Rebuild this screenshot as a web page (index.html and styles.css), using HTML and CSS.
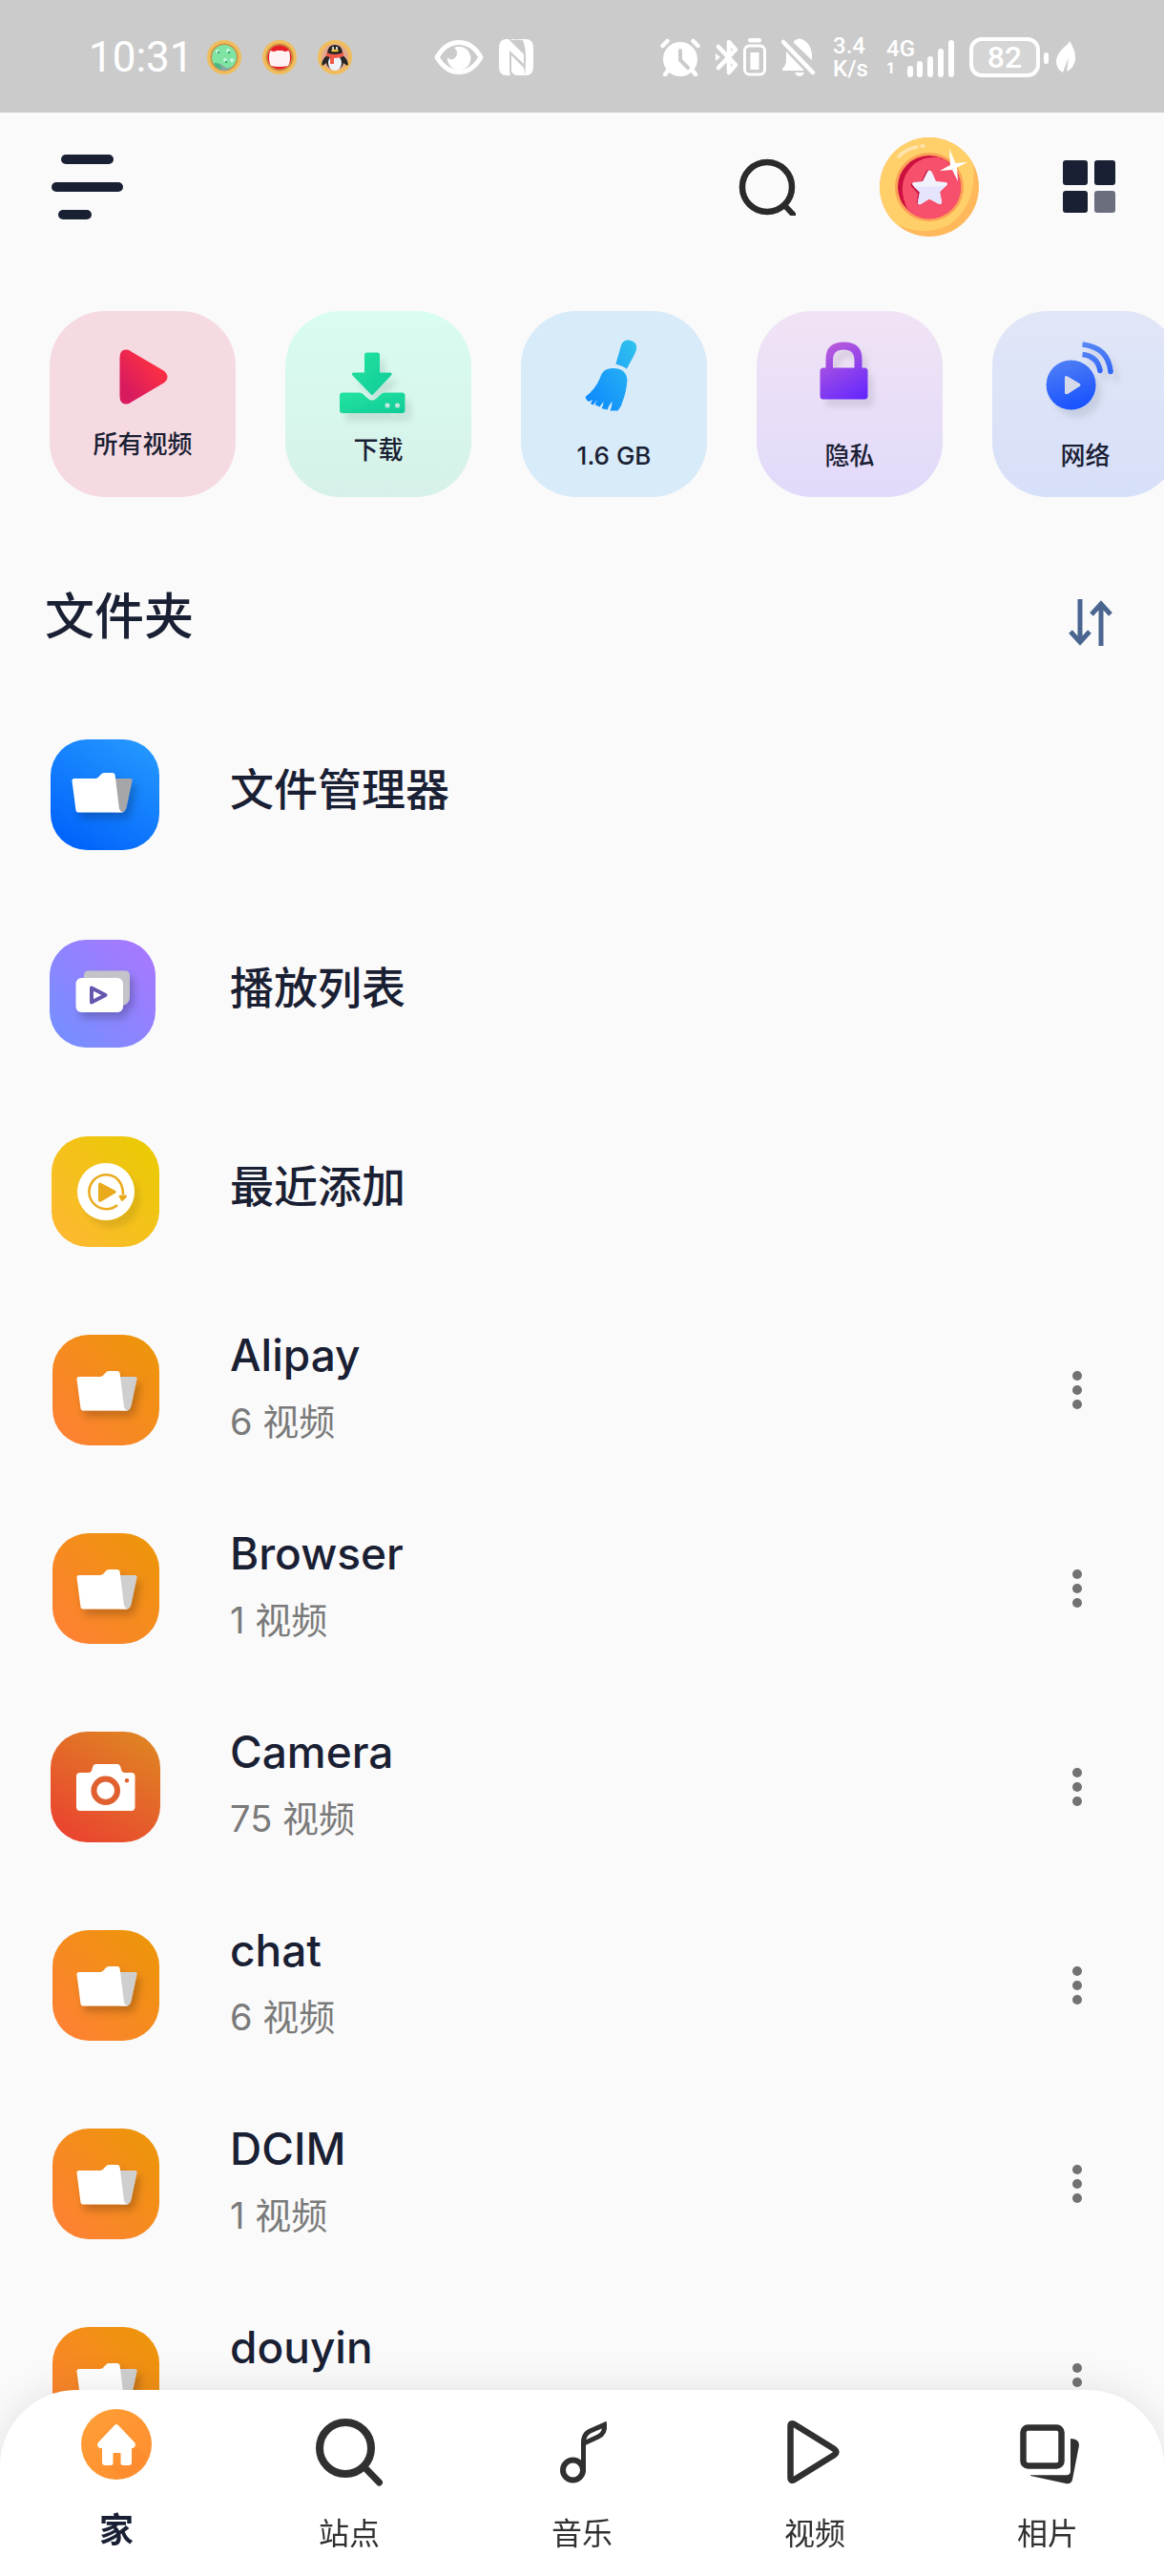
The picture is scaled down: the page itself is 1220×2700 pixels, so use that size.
FILE: index.html
```
<!DOCTYPE html>
<html lang="zh-CN">
<head>
    <meta charset="UTF-8">
    <meta name="viewport" content="width=device-width, initial-scale=1.0">
    <title>文件夹</title>
    <link rel="stylesheet" href="styles.css">
</head>
<body>
    <!-- Shared gradients and symbols -->
    <svg class="defs" width="0" height="0" aria-hidden="true">
        <defs>
            <linearGradient id="gOrange" x1="0" y1="1" x2="1" y2="0"><stop offset="0" stop-color="#ff7f37"/><stop offset="1" stop-color="#ec9706"/></linearGradient>
            <linearGradient id="gBlue" x1="0.2" y1="1" x2="0.8" y2="0"><stop offset="0" stop-color="#0062fb"/><stop offset="1" stop-color="#2497ff"/></linearGradient>
            <linearGradient id="gPurple" x1="0" y1="1" x2="1" y2="0"><stop offset="0.15" stop-color="#7a8dff"/><stop offset="1" stop-color="#ac76ff"/></linearGradient>
            <linearGradient id="gYellow" x1="0" y1="1" x2="1" y2="0"><stop offset="0" stop-color="#ffb735"/><stop offset="1" stop-color="#e9cc00"/></linearGradient>
            <linearGradient id="gCamera" x1="0.2" y1="1" x2="0.8" y2="0"><stop offset="0" stop-color="#ea4330"/><stop offset="1" stop-color="#df8423"/></linearGradient>
            <linearGradient id="gPlay" x1="0" y1="1" x2="1" y2="0"><stop offset="0.2" stop-color="#d81b5f"/><stop offset="0.8" stop-color="#ff3140"/></linearGradient>
            <linearGradient id="gGreen" x1="0" y1="0" x2="1" y2="1"><stop offset="0" stop-color="#25e3a0"/><stop offset="1" stop-color="#0fcb98"/></linearGradient>
            <linearGradient id="gBroom" x1="1" y1="0" x2="0" y2="1"><stop offset="0" stop-color="#31c3ee"/><stop offset="1" stop-color="#0a84ff"/></linearGradient>
            <linearGradient id="gLock" gradientUnits="userSpaceOnUse" x1="30" y1="6" x2="66" y2="68"><stop offset="0" stop-color="#bd5fd8"/><stop offset="1" stop-color="#6226ff"/></linearGradient>
            <linearGradient id="gNet" gradientUnits="userSpaceOnUse" x1="30" y1="10" x2="50" y2="78"><stop offset="0" stop-color="#5d8af2"/><stop offset="1" stop-color="#154fff"/></linearGradient>
            <linearGradient id="gHome" x1="0" y1="0" x2="1" y2="1"><stop offset="0" stop-color="#ff9f36"/><stop offset="1" stop-color="#ff8c2e"/></linearGradient>
            <filter id="shadow" x="-40%" y="-40%" width="200%" height="200%"><feDropShadow dx="4" dy="6" stdDeviation="4" flood-color="#000" flood-opacity="0.22"/></filter>
            <filter id="soft" x="-40%" y="-40%" width="200%" height="200%"><feDropShadow dx="6" dy="8" stdDeviation="3" flood-color="#000" flood-opacity="0.09"/></filter>
        </defs>
        <symbol id="folder" viewBox="0 0 116 116">
            <g filter="url(#shadow)">
                <path fill="currentColor" d="M70 44h19.500q2.500 0 2 2.500l-6 28q-1 4-4 5H74z"/>
                <path fill="#fff" d="M31 44h22q2 0 3.500-1.800l2-2.200q1.600-1.900 4-1.900h8.200q2.700 0 3 2.900l4.100 33.500q.6 4 4.200 4.900H35q-2.200 0-2.500-2.200L28.500 46.500Q28.300 44 31 44z"/>
            </g>
        </symbol>
        <symbol id="dots" viewBox="0 0 10 40">
            <circle cx="5" cy="5" r="5"/><circle cx="5" cy="20" r="5"/><circle cx="5" cy="35" r="5"/>
        </symbol>
        <symbol id="orangeFolder" viewBox="0 0 116 116">
            <rect x="3" width="112" height="116" rx="38" fill="url(#gOrange)"/>
            <use href="#folder" width="116" height="116"/>
        </symbol>
    </svg>

    <div class="status-bar">
        <span class="time">10:31</span>
        <div class="status-coins">
            <svg width="36" height="38" viewBox="0 0 36 38"><circle cx="18" cy="19" r="18" fill="#f0bd5c"/><circle cx="18" cy="19" r="14.500" fill="#c98f43"/><circle cx="18" cy="19" r="13" fill="#7fe3a2"/><path d="M8 28q4-5 9 0t11-1q-4 6-10 6T8 28z" fill="#8aa6a0"/><path d="M7 26q3-3 9 4l-3 1q-4-2-6-5z" fill="#43b880"/><g fill="#c9f7e2"><circle cx="11" cy="13" r="2"/><circle cx="22" cy="12" r="2"/><circle cx="19" cy="22" r="2"/><circle cx="26" cy="22" r="2"/></g><g fill="#2fa768"><circle cx="12" cy="14" r="1.200"/><circle cx="23" cy="14" r="1.200"/><circle cx="20" cy="24" r="1.200"/></g></svg>
            <svg width="36" height="38" viewBox="0 0 36 38"><circle cx="18" cy="19" r="18" fill="#f0bd5c"/><circle cx="18" cy="19" r="14.500" fill="#d08c3e"/><circle cx="18" cy="19" r="12.500" fill="#e8202a"/><path d="M9 12q3 2 6 0h6q3 2 6 0 2 1 2 7t-2 9q-9 2-18 0-2-3-2-9t2-7z" fill="#fff2f2"/></svg>
            <svg width="36" height="38" viewBox="0 0 36 38"><circle cx="18" cy="19" r="18" fill="#f0bd5c"/><circle cx="18" cy="19" r="14" fill="#e3a98f"/><path d="M10 16Q10 6 18 6t8 10l4 5q3 5 1 7l-4-3q-1 6-9 7-8-1-9-7l-4 3q-2-2 1-7z" fill="#262626"/><ellipse cx="18" cy="25" rx="7" ry="8" fill="#eef3f8"/><path d="M9 14q9 4 18 0v4q-4 2-10 2v6h-4v-7l-4-1z" fill="#f0584a"/><ellipse cx="18" cy="12" rx="4" ry="1.300" fill="#f6c33c"/><ellipse cx="16" cy="9.500" rx="1" ry="1.400" fill="#fff"/><ellipse cx="20" cy="9.500" rx="1" ry="1.400" fill="#fff"/></svg>
        </div>
        <div class="status-left-icons">
            <svg width="52" height="38" viewBox="0 0 52 38"><path d="M3 19Q12 3.500 26 3.500T49 19Q40 34.500 26 34.500T3 19z" fill="none" stroke="#fff" stroke-width="5" stroke-linejoin="round"/><path d="M21 9a12.200 12.200 0 1 1-7 10 5 5 0 0 0 9-1q3-5-2-9z" fill="#fff"/></svg>
            <svg width="36" height="38" viewBox="0 0 36 38"><path d="M8 0h2l16 16v10L11 12v19q0 5 1 7H8q-8 0-8-9V9q0-9 8-9zM13 1q5-1 12 0 3 8 3 18 0 12-1 19h1q8 0 8-9V9q0-9-8-9H13zM13 17l13 13q1 5 1 8h-8q-6-1-6-6z" fill="#fff"/></svg>
        </div>
        <div class="status-right">
            <svg width="42" height="40" viewBox="0 0 42 40"><g stroke="#fff" stroke-width="4.500" stroke-linecap="round"><path d="M2.500 8l5-5M39.500 8l-5-5M9 33l-4 5M33 33l4 5"/></g><circle cx="21" cy="22" r="18" fill="#fff"/><path d="M21 13v10l8 8" fill="none" stroke="#cbcbcb" stroke-width="4" stroke-linecap="round"/></svg>
            <svg width="53" height="40" viewBox="0 0 53 40"><path d="M3 9l18 19-7 8V4l7 8L3 31" fill="none" stroke="#fff" stroke-width="4.500" stroke-linejoin="round" stroke-linecap="round"/><path d="M0 16v8l5-4z" fill="#fff"/><rect x="34" width="14" height="4.500" rx="2.200" fill="#fff"/><rect x="30.500" y="8" width="21" height="30" rx="5" fill="none" stroke="#fff" stroke-width="3"/><rect x="36.500" y="15" width="9" height="18" fill="#fff"/></svg>
            <svg width="38" height="40" viewBox="0 0 38 40"><path d="M2 4l31 32" stroke="#fff" stroke-width="4.500" stroke-linecap="round"/><path d="M5 14l19 20H2q-2 0-1-2 4-3 4-9zM13 3q6-5 12 0 8 6 7 20L13 5zM14 36h10q-2 4-5 4t-5-4z" fill="#fff"/></svg>
            <div class="net-speed"><span>3.4</span><span>K/s</span></div>
            <div class="network-state">
                <div class="net-type"><span>4G</span><span class="sim">1</span></div>
                <svg width="49" height="40" viewBox="0 0 49 40" stroke="#fff" stroke-width="6" stroke-linecap="round"><path d="M3 31v6M13 26v11M24 21v16M35 13v24M46 4v33"/></svg>
            </div>
            <div class="battery">
                <span class="battery-level">82</span>
                <svg width="33" height="34" viewBox="0 0 33 34"><rect y="12" width="5" height="12" rx="2.500" fill="#fff"/><path d="M27 0q7 11 6 20-2 9-9 12l2-15-6 16q-7-3-7-13 2-9 10-15 3-2 4-5z" fill="#fff"/></svg>
            </div>
        </div>
    </div>

    <header class="top-bar">
        <button class="icon-btn" type="button" aria-label="菜单">
            <svg width="75" height="68" viewBox="0 0 75 68" fill="#1a2033"><rect x="10" width="55" height="10" rx="5"/><rect y="29" width="75" height="10" rx="5"/><rect x="7" y="58" width="35" height="10" rx="5"/></svg>
        </button>
        <div class="top-actions">
            <button class="icon-btn" type="button" aria-label="搜索">
                <svg width="60" height="60" viewBox="0 0 60 60" fill="none" stroke="#2a2a2a" stroke-linecap="round"><circle cx="30" cy="30" r="26" stroke-width="6.500"/><path d="M50 51l7.500 8" stroke-width="6"/></svg>
            </button>
            <button class="icon-btn" type="button" aria-label="奖励">
                <svg width="104" height="104" viewBox="0 0 104 104">
                    <circle cx="52" cy="52" r="52" fill="#ffb95c"/>
                    <path d="M52 0a52 52 0 0 1 46 28Q102 72 72 92 48 104 19 92A52 52 0 0 1 52 0z" fill="#ffd06a"/>
                    <circle cx="52" cy="52" r="36" fill="#fda057"/>
                    <circle cx="52" cy="52" r="33" fill="#cc103f"/>
                    <path d="M62 21a33 33 0 1 1-32 56Q15 47 36 28q11-9 26-7z" fill="#f7506c"/>
                    <path d="M51 34q-2 0-3 3l-4 9-8 1q-4 1-3 4l7 8-1 8 1 4z" fill="#c31345"/>
                    <path d="M52 34.500q2 0 3 2.500l4 9 10 1q3.500 1 1 3.500l-7 6.500 2 10q0 4-3.500 2.500L52 64.500 43 70q-3.500 1-3-2.500l2-10-7-7q-2.500-3 1-3.500l9-1 4.500-9q1-2.500 2.500-2.500z" fill="#f2f2ff"/>
                    <path d="M36 52l33-1-6 6 2 10q0 4-3.500 2.500L52 64.500 43 70q-3.500 1-3-2.500l2-10z" fill="#e4e5fc"/>
                    <path d="M20 20q8-8 19-10M44 9h2" stroke="#ffe3ae" stroke-width="3.500" stroke-linecap="round" fill="none"/>
                    <path d="M73 12l6.500 15L92 26l-11 5.500 1 14.500-6-12-13 1 11-6z" fill="#fff"/>
                    <circle cx="77.500" cy="30" r="3.500" fill="#fff"/>
                </svg>
            </button>
            <button class="icon-btn" type="button" aria-label="视图">
                <svg width="56" height="56" viewBox="0 0 56 56" fill="#1a2033"><rect width="26" height="26" rx="3"/><rect x="33" width="22" height="26" rx="3"/><rect y="32" width="26" height="23" rx="3"/><rect x="33" y="32" width="22" height="23" rx="3" fill="#6a6e7d"/></svg>
            </button>
        </div>
    </header>

    <main>
        <div class="shortcuts">
            <button class="shortcut all-videos" type="button">
                <svg width="84" height="84" viewBox="0 0 84 84"><path d="M17.500 11q0-9 7-8.500 3 0 5 2l34 20q4 3 4 6.500t-4 6.500l-34 20q-2 2-5 2-7 .5-7-8.500z" fill="url(#gPlay)"/></svg>
                <span>所有视频</span>
            </button>
            <button class="shortcut downloads" type="button">
                <svg width="96" height="96" viewBox="0 0 96 96"><g filter="url(#soft)" fill="url(#gGreen)"><path d="M35.500 11.500h11q2.500 0 2.500 2.500v18.500h10.500q3.500 0 1.500 3L42.500 55q-1.500 1.700-3 0L20.500 35.500q-2-3 1.500-3h11V14q0-2.500 2.500-2.500z"/><path fill-rule="evenodd" d="M10 53.500h18q3 0 5 3l4 3.500q4 3 8 0l4-3.500q2-3 5-3h18.500q3 0 3 3V72q0 3-3 3H10q-3 0-3-3V56.500q0-3 3-3zM57 64.400a2.600 2.600 0 1 0 .1 0zM67.500 64.400a2.600 2.600 0 1 0 .1 0z"/></g></svg>
                <span>下载</span>
            </button>
            <button class="shortcut cleaner" type="button">
                <svg width="108" height="108" viewBox="0 0 108 108"><path d="M61 10q2-6 8-5.500 9 1 8 10-1 3-2.500 6L67 34.500Q61 31 55.400 29.500zM39 44q3-11 14-10 13 0 14.500 12-1 13-5 23-1 5-5 9.500h-8q2-4 2-10-3 4-5 9l-6-1.500q2-3 2-7l-4 5.500-5-2.500 2.500-5-4.500 5.500-2.500-1.500 2-4-4 2q-3-2-3.500-5Q34 56 39 44z" fill="url(#gBroom)"/></svg>
                <span>1.6 GB</span>
            </button>
            <button class="shortcut privacy" type="button">
                <svg width="108" height="108" viewBox="0 0 108 108"><path filter="url(#soft)" d="M28.500 33.500v-9q0-18 19-18t19 18v9H69q3.500 0 3.500 3.500v26q0 3.500-3.500 3.500H26q-3.500 0-3.500-3.500V37q0-3.500 3.500-3.500zM36 33.500h22.500v-8q0-11-11.200-11T36 25.500z" fill="url(#gLock)" fill-rule="evenodd"/></svg>
                <span>隐私</span>
            </button>
            <button class="shortcut network" type="button">
                <svg width="108" height="108" viewBox="0 0 108 108"><g filter="url(#soft)"><circle cx="38.600" cy="51.500" r="26" fill="url(#gNet)"/><path d="M50.500 9q27 3 29.500 28.500M50.500 19.500q16 2 18.500 17" fill="none" stroke="url(#gNet)" stroke-width="5.500"/><circle cx="80" cy="37.500" r="2.700" fill="#3168f6"/><circle cx="69" cy="36.500" r="2.700" fill="#3168f6"/></g><path d="M32 44q0-3 3-1.500L47.500 50q2 1.500 0 3L35 61q-3 1-3-1.500z" fill="#d5daea"/></svg>
                <span>网络</span>
            </button>
        </div>

        <div class="section-head">
            <h1>文件夹</h1>
            <button class="icon-btn" type="button" aria-label="排序">
                <svg width="46" height="60" viewBox="0 0 46 60" fill="none" stroke="#4a658f" stroke-width="5"><path d="M12 11v44M2 45l10 11 10-11M34 60V16M24 27l10-11 10 11"/></svg>
            </button>
        </div>

        <ul class="folder-list">
            <li class="folder-row">
                <svg class="folder-icon blue-folder" viewBox="0 0 116 116"><rect x="1" width="114" height="116" rx="38" fill="url(#gBlue)"/><use href="#folder" x="-5" y="-3" width="116" height="116"/></svg>
                <div class="folder-text single-line"><h2>文件管理器</h2></div>
            </li>
            <li class="folder-row">
                <svg class="folder-icon" viewBox="0 0 116 116"><rect y="2" width="111" height="113" rx="38" fill="url(#gPurple)"/><g filter="url(#shadow)"><path d="M41 34.500h38q5 0 5 5V62q0 7-8 9L36 45v-5.500q0-5 5-5z" fill="#c3c3c9"/><rect x="27.500" y="42" width="49.500" height="36" rx="6" fill="#fff"/></g><path d="M44 52.500v15l14.500-7.500z" fill="none" stroke="#6557ae" stroke-width="4" stroke-linejoin="round"/></svg>
                <div class="folder-text single-line"><h2>播放列表</h2></div>
            </li>
            <li class="folder-row">
                <svg class="folder-icon" viewBox="0 0 116 116"><rect x="2" width="113" height="116" rx="38" fill="url(#gYellow)"/><circle cx="59" cy="58" r="30" fill="#fff" filter="url(#soft)"/><path d="M77 61Q77 49 69 43a18 18 0 1 0 2 29" fill="none" stroke="#e9ab1c" stroke-width="2.600"/><path d="M72.500 63q0-1.500 2-1.500h5q2 0 1.500 2l-4 4q-1 .8-2 0z" fill="#e9ab1c"/><path d="M51 51q0-3.500 3-2l15 8q1.500 1.200 0 2.400l-15 9q-3 1-3-2z" fill="#e9ab1c"/></svg>
                <div class="folder-text single-line"><h2>最近添加</h2></div>
            </li>
            <li class="folder-row">
                <svg class="folder-icon"><use href="#orangeFolder"/></svg>
                <div class="folder-text"><h2>Alipay</h2><p>6 视频</p></div>
                <button class="icon-btn more-btn" type="button" aria-label="更多"><svg width="10" height="40"><use href="#dots"/></svg></button>
            </li>
            <li class="folder-row">
                <svg class="folder-icon"><use href="#orangeFolder"/></svg>
                <div class="folder-text"><h2>Browser</h2><p>1 视频</p></div>
                <button class="icon-btn more-btn" type="button" aria-label="更多"><svg width="10" height="40"><use href="#dots"/></svg></button>
            </li>
            <li class="folder-row">
                <svg class="folder-icon" viewBox="0 0 116 116"><rect x="1" width="115" height="116" rx="38" fill="url(#gCamera)"/><path d="M32 43h9q2 0 3-2l1.500-5q1-2 3-2h22.500q2 0 3 2l1.500 5q1 2 3 2h7q4 0 4 4v32q0 4-4 4H32q-4 0-4-4V47q0-4 4-4z" fill="#fff"/><circle cx="58.700" cy="61.700" r="12.300" fill="none" stroke="#e0602f" stroke-width="6"/><circle cx="81" cy="51.300" r="2.200" fill="#e0602f"/></svg>
                <div class="folder-text"><h2>Camera</h2><p>75 视频</p></div>
                <button class="icon-btn more-btn" type="button" aria-label="更多"><svg width="10" height="40"><use href="#dots"/></svg></button>
            </li>
            <li class="folder-row">
                <svg class="folder-icon"><use href="#orangeFolder"/></svg>
                <div class="folder-text"><h2>chat</h2><p>6 视频</p></div>
                <button class="icon-btn more-btn" type="button" aria-label="更多"><svg width="10" height="40"><use href="#dots"/></svg></button>
            </li>
            <li class="folder-row">
                <svg class="folder-icon"><use href="#orangeFolder"/></svg>
                <div class="folder-text"><h2>DCIM</h2><p>1 视频</p></div>
                <button class="icon-btn more-btn" type="button" aria-label="更多"><svg width="10" height="40"><use href="#dots"/></svg></button>
            </li>
            <li class="folder-row">
                <svg class="folder-icon"><use href="#orangeFolder"/></svg>
                <div class="folder-text"><h2>douyin</h2></div>
                <button class="icon-btn more-btn" type="button" aria-label="更多"><svg width="10" height="40"><use href="#dots"/></svg></button>
            </li>
        </ul>
    </main>

    <nav class="bottom-nav">
        <a class="nav-item active" href="#home">
            <svg width="80" height="88" viewBox="0 0 80 88"><circle cx="40" cy="38" r="37" fill="url(#gHome)"/><path d="M59 38l12 12Q64 68 46 74L32 60h23z" fill="#f78430" opacity=".3"/><path d="M38 18q2-2 4 0l17 18q2.500 3.500-1.500 6H56v15q0 3-3 3h-6q-2.500 0-2.500-2.500V47h-8v10.500q0 2.500-2.500 2.500h-6q-3 0-3-3V42h-2.500q-4-2.500-1.500-6z" fill="#fff"/></svg>
            <span>家</span>
        </a>
        <a class="nav-item" href="#sites">
            <svg width="80" height="88" viewBox="0 0 80 88" fill="none" stroke="#303030" stroke-linecap="round"><circle cx="36" cy="42" r="27" stroke-width="8"/><path d="M57 63l14.500 15" stroke-width="7"/></svg>
            <span>站点</span>
        </a>
        <a class="nav-item" href="#music">
            <svg width="80" height="88" viewBox="0 0 80 88" fill="none" stroke="#303030" stroke-width="5"><circle cx="30.500" cy="65" r="10.500" stroke-width="6"/><path d="M41.500 67V36q0-8 6-11.500L63.500 17.500q1 9-6.500 12.500L43 36.500"/></svg>
            <span>音乐</span>
        </a>
        <a class="nav-item" href="#videos">
            <svg width="80" height="88" viewBox="0 0 80 88" fill="none" stroke="#303030" stroke-width="6.500" stroke-linejoin="round"><path d="M14.500 19q0-4 4-2l42 26q4 3 0 6l-42 26q-4 2-4-2z"/></svg>
            <span>视频</span>
        </a>
        <a class="nav-item" href="#photos">
            <svg width="80" height="88" viewBox="0 0 80 88"><rect x="14.500" y="20.500" width="40" height="40" rx="5" fill="none" stroke="#303030" stroke-width="6.500"/><path d="M64 32q9 0 9 7l-7 36q-1 5-7 4L22 71v-.7h37.500q4.500 0 4.500-4.500z" fill="#303030"/></svg>
            <span>相片</span>
        </a>
    </nav>
</body>
</html>
```
FILE: styles.css
```
* {
    box-sizing: border-box;
}

body {
    margin: 0;
    min-height: 100vh;
    background: #fafafa;
    color: #1a2033;
    font-family: Inter, "Noto Sans CJK SC", sans-serif;
    overflow-x: hidden;
}

svg {
    display: block;
    flex: none;
}

.defs {
    position: absolute;
}

h1, h2, p, ul {
    margin: 0;
    padding: 0;
}

button {
    border: none;
    font: inherit;
    color: inherit;
    cursor: pointer;
}

.icon-btn {
    background: none;
    padding: 0;
}

/* Status bar */
.status-bar {
    display: flex;
    align-items: center;
    height: 118px;
    padding: 2px 93px 0;
    background: #cbcbcb;
    color: #fff;
    font-family: Roboto, sans-serif;
    font-weight: 500;
}

.time {
    width: 124px;
    font-size: 44px;
    font-weight: 400;
    line-height: 48px;
}

.status-coins {
    display: flex;
    gap: 22px;
}

.status-left-icons {
    display: flex;
    gap: 16px;
    margin-left: 86px;
}

.status-right {
    display: flex;
    align-items: center;
    gap: 16px;
    margin-left: auto;
}

.net-speed {
    display: flex;
    flex-direction: column;
    width: 40px;
    font-size: 24px;
    line-height: 24px;
}

.network-state {
    display: flex;
    align-items: flex-end;
    width: 71px;
}

/* the 4G label runs over the short signal bars */
.net-type {
    display: flex;
    flex-direction: column;
    width: 22px;
    font-size: 24px;
    line-height: 24px;
}

.sim {
    font-size: 16px;
    font-weight: 700;
    line-height: 18px;
}

.battery {
    display: flex;
    align-items: center;
    gap: 4px;
}

.battery-level {
    width: 74px;
    border: 4px solid #fff;
    border-radius: 13px;
    background: #d5d5d5;
    font-size: 32px;
    line-height: 34px;
    text-align: center;
}

/* Top bar */
.top-bar {
    display: flex;
    align-items: center;
    justify-content: space-between;
    height: 156px;
    padding: 0 50px 0 54px;
}

.top-actions {
    display: flex;
    align-items: center;
    gap: 88px;
}

/* Shortcut cards */
.shortcuts {
    display: flex;
    gap: 52px;
    padding: 52px 0 0 52px;
    overflow: hidden;
}

.shortcut {
    display: flex;
    flex: none;
    flex-direction: column;
    align-items: center;
    justify-content: center;
    width: 195px;
    height: 195px;
    padding: 0;
    border-radius: 58px;
    font-size: 26px;
    font-weight: 500;
    line-height: 36px;
}

.all-videos { background: #f5dae1; }
.downloads { background: linear-gradient(#d9fdf0, #d6f1e9); }
.cleaner { background: #d8ebf9; }
.privacy { background: linear-gradient(#f1e3f5, #e1dafa); }
.network { background: linear-gradient(#e1e6f7, #d7e0f9); }

/* Folder list */
.section-head {
    display: flex;
    align-items: center;
    justify-content: space-between;
    height: 168px;
    margin-top: 40px;
    padding: 4px 54px 0 47px;
}

.section-head h1 {
    font-size: 52px;
    font-weight: 500;
    line-height: 72px;
}

.folder-list {
    list-style: none;
}

.folder-row {
    display: flex;
    align-items: center;
    height: 208px;
    padding: 0 86px 0 52px;
}

.folder-icon {
    width: 116px;
    height: 116px;
    color: #cfcfcf;
}

.blue-folder {
    color: #a6a6a8;
}

.folder-text {
    flex: 1;
    min-height: 144px;
    margin-left: 73px;
}

.single-line {
    min-height: 0;
    padding-bottom: 12px;
}

.folder-text h2 {
    font-size: 46px;
    font-weight: 500;
    line-height: 70px;
}

.folder-text p {
    color: #7a7a7a;
    font-size: 38px;
    line-height: 70px;
}

.more-btn {
    fill: #727272;
}

/* Bottom navigation */
.bottom-nav {
    position: fixed;
    right: 0;
    bottom: 0;
    left: 0;
    display: flex;
    height: 195px;
    padding-top: 19px;
    background: #fff;
    border-radius: 80px 80px 0 0;
    box-shadow: 0 0 40px rgba(0, 0, 0, 0.1);
}

.nav-item {
    display: flex;
    flex: 1;
    flex-direction: column;
    align-items: center;
    gap: 22px;
    color: #303030;
    font-size: 32px;
    line-height: 44px;
    text-decoration: none;
}

.nav-item.active {
    gap: 18px;
    color: #1a2033;
    font-size: 36px;
    font-weight: 700;
}
```
